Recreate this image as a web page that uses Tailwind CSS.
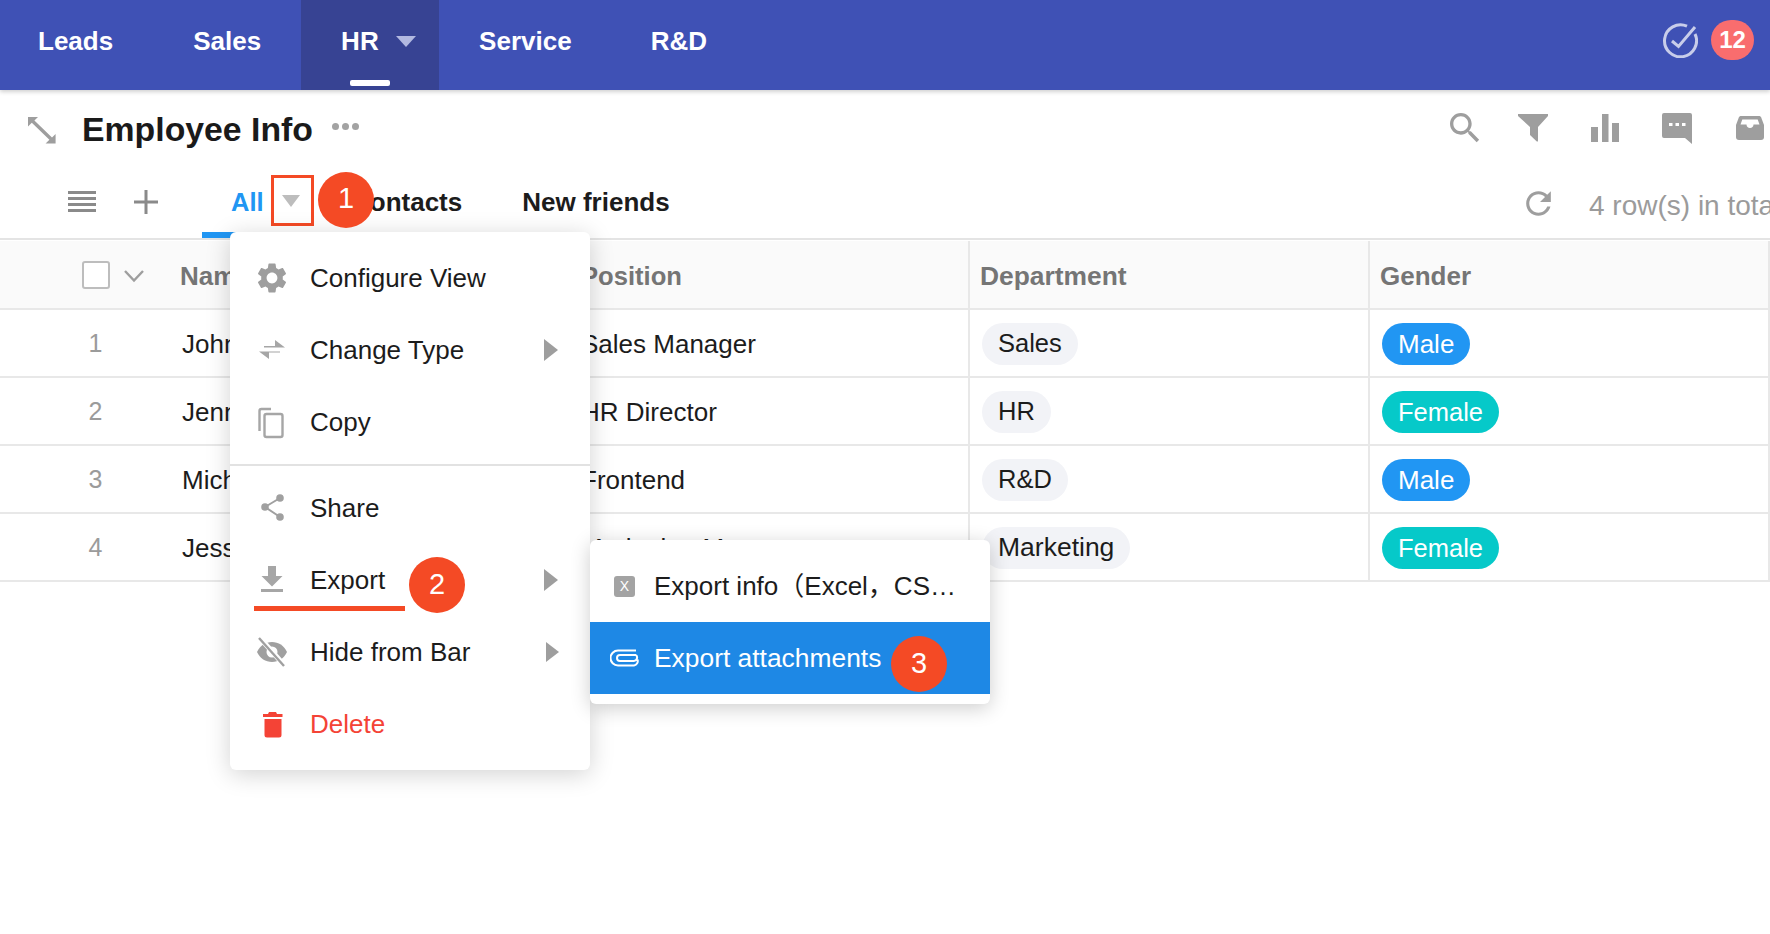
<!DOCTYPE html>
<html lang="en">
<head>
<meta charset="utf-8">
<title>Employee Info</title>
<script src="https://cdn.jsdelivr.net/npm/@tailwindcss/browser@4"></script>
</head>
<body class="w-[1770px] h-[934px] overflow-hidden bg-white relative font-['Liberation_Sans','Noto_Sans_CJK_SC',sans-serif] text-[26px] text-[#1c1c1c]">

<!-- top nav -->
<header class="relative z-10 h-[90px] bg-[#3f51b5] flex items-stretch text-white font-bold text-[26px] shadow-[0_2px_4px_rgba(0,0,0,0.18)]">
  <div class="pl-[38px] pr-[40px] flex items-center pb-[8px]">Leads</div>
  <div class="px-[40px] flex items-center pb-[8px]">Sales</div>
  <div class="relative w-[138px] pl-[40px] bg-[#374393] flex items-center pb-[8px]">
    <span>HR</span>
    <svg class="ml-[17px] mt-[1px]" width="20" height="11" viewBox="0 0 20 11"><path d="M0 0h20L10 11z" fill="#b2b9e1"/></svg>
    <span class="absolute left-[49px] top-[80px] w-[40px] h-[6px] rounded-[2px] bg-white"></span>
  </div>
  <div class="px-[40px] flex items-center pb-[8px]">Service</div>
  <div class="pl-[39px] pr-[40px] flex items-center pb-[8px]">R&amp;D</div>
  <div class="ml-auto flex items-center gap-[13px] pr-[16px] pb-[10px]">
    <svg width="36" height="36" viewBox="0 0 36 36" fill="none" stroke="#c8cdea" stroke-width="3"><path d="M33 12A16 16 0 1 1 25 4.200"/><path d="M10 19l6.500 5.500L33 5"/></svg>
    <span class="w-[43px] h-[40px] rounded-full bg-[#f96d6e] flex items-center justify-center text-[24px] leading-none">12</span>
  </div>
</header>

<!-- title row -->
<div class="h-[80px] flex items-center relative">
  <svg class="ml-[27px] shrink-0" width="30" height="30" viewBox="0 0 30 30" fill="#9e9e9e"><path d="M1 2h10l-3.600 3.600L25 22.600l3.600-3.600v9.500H18.600l3.800-3.700L4.800 7.800 1 11.500z"/></svg>
  <h1 class="ml-[25px] text-[33.800px] leading-none font-bold text-[#1a1a1a] whitespace-nowrap">Employee Info</h1>
  <div class="ml-[19px] mb-[7px] flex gap-[3px]">
    <span class="w-[7px] h-[7px] rounded-full bg-[#a3a3a3]"></span>
    <span class="w-[7px] h-[7px] rounded-full bg-[#a3a3a3]"></span>
    <span class="w-[7px] h-[7px] rounded-full bg-[#a3a3a3]"></span>
  </div>
  <div class="ml-auto flex items-center pr-[6px] mb-[5px]">
    <svg width="40" height="40" viewBox="0 0 24 24" fill="#9e9e9e"><path d="M15.500 14h-.79l-.28-.27C15.410 12.590 16 11.110 16 9.500 16 5.910 13.090 3 9.500 3S3 5.910 3 9.500 5.910 16 9.500 16c1.610 0 3.090-.59 4.230-1.570l.27.28v.79l5 4.990L20.490 19l-4.990-5zm-6 0C7.010 14 5 11.990 5 9.500S7.010 5 9.500 5 14 7.010 14 9.500 11.990 14 9.500 14z"/></svg>
    <svg class="ml-[32px]" width="32" height="30" viewBox="0 0 32 30" fill="#9e9e9e"><path d="M1 1h30v2L21 14v13.500c0 1-.6 1.600-1.500.8L13 22v-8L1 3z"/></svg>
    <svg class="ml-[42px]" width="28" height="28" viewBox="0 0 28 28" fill="#9e9e9e"><path d="M0 13h7v15H0zM11 0h6.500v28H11zM21 9h7v19h-7z"/></svg>
    <svg class="ml-[42px]" width="32" height="32" viewBox="0 0 32 32" fill="#9e9e9e"><path d="M3 1h26a2 2 0 0 1 2 2v29l-7-6H3a2 2 0 0 1-2-2V3a2 2 0 0 1 2-2z"/><path d="M8 11h3.500v3H8zM14.500 11H18v3h-3.500zM21 11h3.500v3H21z" fill="#fff"/></svg>
    <svg class="ml-[43px]" width="28" height="24" viewBox="0 0 28 24" fill="#9e9e9e"><path d="M5 0h18c1 0 1.800.5 2.200 1.500L28 9v12a3 3 0 0 1-3 3H3a3 3 0 0 1-3-3V9l2.800-7.500C3.200.5 4 0 5 0z"/><path d="M4.500 8.500l1.800-5h15.400l1.800 5h-6c0 2-1.500 3.500-3.500 3.500s-3.500-1.500-3.500-3.500z" fill="#fff"/></svg>
  </div>
</div>

<!-- tabs row -->
<div class="h-[68px] flex items-center pb-[4px] relative whitespace-nowrap">
  <svg class="ml-[68px] shrink-0" width="28" height="24" viewBox="0 0 28 24" fill="#8a8a8a"><path d="M0 1h28v3H0zM0 7h28v3H0zM0 13h28v3H0zM0 19h28v3H0z"/></svg>
  <svg class="ml-[37px] shrink-0" width="26" height="26" viewBox="0 0 26 26" fill="#8a8a8a"><path d="M11.500 1h3v10.500H25v3H14.500V25h-3V14.500H1v-3h10.500z"/></svg>
  <div class="ml-[72px] font-bold text-[#2196f3] w-[120px] shrink-0 text-[25.500px]">All</div>
  <div class="font-bold">Contacts</div>
  <div class="ml-[60px] font-bold">New friends</div>
  <span class="absolute left-[202px] top-[62px] w-[128px] h-[6px] bg-[#2196f3]"></span>
  <div class="ml-auto flex items-center mt-[3px] w-[244px] shrink-0 overflow-hidden">
    <svg class="-ml-[6px] shrink-0" width="37" height="37" viewBox="0 0 24 24" fill="#9e9e9e"><path d="M17.650 6.350C16.200 4.900 14.210 4 12 4c-4.420 0-7.990 3.580-7.990 8s3.570 8 7.990 8c3.730 0 6.840-2.550 7.730-6h-2.080c-.82 2.330-3.040 4-5.650 4-3.310 0-6-2.690-6-6s2.690-6 6-6c1.660 0 3.140.69 4.220 1.780L13 11h7V4l-2.350 2.350z"/></svg>
    <span class="ml-[32px] pt-[5px] text-[#9b9b9b] text-[28px]">4 row(s) in total</span>
  </div>
</div>

<!-- table -->
<div class="border-t-2 border-[#e4e4e4] pt-[1px]">
  <div class="grid grid-cols-[170px_400px_400px_400px_400px] h-[69px] pt-[4px] bg-[#fafafa] border-b-2 border-[#e8e8e8] font-bold text-[#757575]">
    <div class="flex items-center pl-[82px] -mt-[4px]">
      <span class="w-[28px] h-[28px] rounded-[3px] border-2 border-[#bdbdbd] bg-white shrink-0"></span>
      <svg class="ml-[13px] mt-[3px] shrink-0" width="22" height="14" viewBox="0 0 22 14" fill="none" stroke="#9e9e9e" stroke-width="2.400"><path d="M2 2l9 9.500L20 2"/></svg>
    </div>
    <div class="flex items-center pl-[10px] border-r-2 border-[#e8e8e8] -mt-[4px] pt-[4px]">Name</div>
    <div class="flex items-center pl-[11px] border-r-2 border-[#e8e8e8] -mt-[4px] pt-[4px] text-[25.600px]">Position</div>
    <div class="flex items-center pl-[10px] border-r-2 border-[#e8e8e8] -mt-[4px] pt-[4px] text-[26.400px]">Department</div>
    <div class="flex items-center pl-[10px] border-r-2 border-[#e8e8e8] -mt-[4px] pt-[4px]">Gender</div>
  </div>

  <div class="grid grid-cols-[170px_400px_400px_400px_400px] h-[68px] border-b-2 border-[#e8e8e8]">
    <div class="flex items-center justify-center pl-[21px] pt-[2px] text-[#9b9b9b] text-[25px]">1</div>
    <div class="flex items-center pl-[12px] pt-[2px] border-r-2 border-[#e8e8e8]">John</div>
    <div class="flex items-center pl-[11px] pt-[2px] border-r-2 border-[#e8e8e8]">Sales Manager</div>
    <div class="flex items-center pl-[12px] pt-[1px] border-r-2 border-[#e8e8e8]"><span class="h-[42px] px-[16px] rounded-[21px] bg-[#f2f3f7] flex items-center text-[25.500px]">Sales</span></div>
    <div class="flex items-center pl-[12px] pt-[2px] border-r-2 border-[#e8e8e8]"><span class="h-[42px] px-[16px] rounded-[21px] bg-[#2196f3] text-white flex items-center">Male</span></div>
  </div>
  <div class="grid grid-cols-[170px_400px_400px_400px_400px] h-[68px] border-b-2 border-[#e8e8e8]">
    <div class="flex items-center justify-center pl-[21px] pt-[2px] text-[#9b9b9b] text-[25px]">2</div>
    <div class="flex items-center pl-[12px] pt-[2px] border-r-2 border-[#e8e8e8]">Jenny</div>
    <div class="flex items-center pl-[11px] pt-[2px] border-r-2 border-[#e8e8e8]">HR Director</div>
    <div class="flex items-center pl-[12px] pt-[1px] border-r-2 border-[#e8e8e8]"><span class="h-[42px] px-[16px] rounded-[21px] bg-[#f2f3f7] flex items-center text-[25.500px]">HR</span></div>
    <div class="flex items-center pl-[12px] pt-[2px] border-r-2 border-[#e8e8e8]"><span class="h-[42px] px-[16px] rounded-[21px] bg-[#06c9c9] text-white flex items-center text-[25.500px]">Female</span></div>
  </div>
  <div class="grid grid-cols-[170px_400px_400px_400px_400px] h-[68px] border-b-2 border-[#e8e8e8]">
    <div class="flex items-center justify-center pl-[21px] pt-[2px] text-[#9b9b9b] text-[25px]">3</div>
    <div class="flex items-center pl-[12px] pt-[2px] border-r-2 border-[#e8e8e8]">Michael</div>
    <div class="flex items-center pl-[11px] pt-[2px] border-r-2 border-[#e8e8e8]">Frontend</div>
    <div class="flex items-center pl-[12px] pt-[1px] border-r-2 border-[#e8e8e8]"><span class="h-[42px] px-[16px] rounded-[21px] bg-[#f2f3f7] flex items-center text-[25.500px]">R&amp;D</span></div>
    <div class="flex items-center pl-[12px] pt-[2px] border-r-2 border-[#e8e8e8]"><span class="h-[42px] px-[16px] rounded-[21px] bg-[#2196f3] text-white flex items-center">Male</span></div>
  </div>
  <div class="grid grid-cols-[170px_400px_400px_400px_400px] h-[68px] border-b-2 border-[#e8e8e8]">
    <div class="flex items-center justify-center pl-[21px] pt-[2px] text-[#9b9b9b] text-[25px]">4</div>
    <div class="flex items-center pl-[12px] pt-[2px] border-r-2 border-[#e8e8e8]">Jessica</div>
    <div class="flex items-center pl-[11px] pt-[2px] border-r-2 border-[#e8e8e8]">Marketing Manager</div>
    <div class="flex items-center pl-[12px] pt-[1px] border-r-2 border-[#e8e8e8]"><span class="h-[42px] px-[16px] rounded-[21px] bg-[#f2f3f7] flex items-center text-[26.500px]">Marketing</span></div>
    <div class="flex items-center pl-[12px] pt-[2px] border-r-2 border-[#e8e8e8]"><span class="h-[42px] px-[16px] rounded-[21px] bg-[#06c9c9] text-white flex items-center text-[25.500px]">Female</span></div>
  </div>
</div>

<!-- red tab marker -->
<div class="absolute z-20 left-[271px] top-[175px] w-[43px] h-[51px] border-[3px] border-[#f44a25] flex justify-center pt-[17px]">
  <svg class="-ml-[3px]" width="18" height="12" viewBox="0 0 18 12"><path d="M0 0h18L9 12z" fill="#bdbdbd"/></svg>
</div>
<div class="absolute z-40 left-[318px] top-[172px] w-[56px] h-[56px] rounded-full bg-[#f44a25] text-white text-[29px] flex items-center justify-center pb-[3px]">1</div>

<!-- context menu -->
<div class="absolute z-20 left-[230px] top-[232px] w-[360px] h-[538px] bg-white rounded-[6px] py-[10px] shadow-[0_4px_24px_rgba(0,0,0,0.18)]">
  <div class="h-[72px] flex items-center">
    <svg class="ml-[24px] shrink-0" width="36" height="36" viewBox="0 0 24 24" fill="#9e9e9e"><path d="M19.140 12.940c.04-.3.06-.61.06-.94 0-.32-.02-.64-.07-.94l2.030-1.580c.18-.14.23-.41.12-.61l-1.920-3.320c-.12-.22-.37-.29-.59-.22l-2.390.96c-.5-.38-1.030-.7-1.620-.94l-.36-2.540c-.04-.24-.24-.41-.48-.41h-3.840c-.24 0-.43.17-.47.41l-.36 2.540c-.59.24-1.130.57-1.620.94l-2.390-.96c-.22-.08-.47 0-.59.22L2.740 8.870c-.12.21-.08.47.12.61l2.030 1.580c-.05.3-.09.63-.09.94s.02.64.07.94l-2.030 1.580c-.18.14-.23.41-.12.61l1.920 3.320c.12.22.37.29.59.22l2.390-.96c.5.38 1.030.7 1.620.94l.36 2.540c.05.24.24.41.48.41h3.840c.24 0 .44-.17.47-.41l.36-2.540c.59-.24 1.130-.56 1.620-.94l2.390.96c.22.08.47 0 .59-.22l1.920-3.320c.12-.22.07-.47-.12-.61l-2.010-1.580zM12 15.600c-1.980 0-3.600-1.620-3.600-3.600s1.620-3.600 3.600-3.600 3.600 1.620 3.600 3.600-1.620 3.600-3.600 3.600z"/></svg>
    <span class="ml-[20px]">Configure View</span>
  </div>
  <div class="h-[72px] flex items-center">
    <svg class="ml-[24px] shrink-0" width="36" height="36" viewBox="0 0 36 36" fill="#a6a6a6"><path d="M10 14h11V8l10 7.500H10zM26 20.500H15V27L5 19.500h21z"/></svg>
    <span class="ml-[20px]">Change Type</span>
    <svg class="ml-auto mr-[32px] shrink-0" width="14" height="22" viewBox="0 0 14 22"><path d="M0 0l14 11L0 22z" fill="#9e9e9e"/></svg>
  </div>
  <div class="h-[72px] flex items-center">
    <svg class="ml-[24px] shrink-0" width="36" height="36" viewBox="0 0 36 36" fill="none" stroke="#a6a6a6" stroke-width="2.400"><path d="M17 5H7.500A2 2 0 0 0 5.500 7V27"/><rect x="10.500" y="10" width="18" height="23" rx="2"/></svg>
    <span class="ml-[20px]">Copy</span>
  </div>
  <div class="h-[2px] bg-[#e2e2e2] mt-[6px] mb-[6px]"></div>
  <div class="h-[72px] flex items-center">
    <svg class="ml-[24px] shrink-0" width="36" height="36" viewBox="0 0 36 36" fill="#a0a0a0" stroke="none"><circle cx="11" cy="17" r="3.800"/><circle cx="26" cy="8" r="3.800"/><circle cx="26" cy="27" r="3.800"/><path d="M11 17L26 8M11 17l15 10" fill="none" stroke="#a0a0a0" stroke-width="2"/></svg>
    <span class="ml-[20px]">Share</span>
  </div>
  <div class="h-[72px] flex items-center relative">
    <svg class="ml-[24px] shrink-0" width="36" height="36" viewBox="0 0 36 36" fill="#a6a6a6"><path d="M14 4h8v10h6.500L18 24.500 7.500 14H14zM7 27h22v3H7z"/></svg>
    <span class="ml-[20px]">Export</span>
    <span class="absolute left-[24px] top-[62px] w-[151px] h-[5px] bg-[#f44a25]"></span>
    <svg class="ml-auto mr-[32px] shrink-0" width="14" height="22" viewBox="0 0 14 22"><path d="M0 0l14 11L0 22z" fill="#9e9e9e"/></svg>
  </div>
  <div class="h-[72px] flex items-center">
    <svg class="ml-[24px] shrink-0" width="36" height="36" viewBox="0 0 36 36"><path d="M3 18c3-6.500 8.500-10 15-10s12 3.500 15 10c-3 6.500-8.500 10-15 10S6 24.500 3 18z" fill="#a0a0a0"/><circle cx="18" cy="18" r="5.500" fill="#fff"/><path d="M6 4l24 27" stroke="#fff" stroke-width="5"/><path d="M5 4l25 28" stroke="#a0a0a0" stroke-width="2.400"/></svg>
    <span class="ml-[20px]">Hide from Bar</span>
    <svg class="ml-auto mr-[31px] shrink-0" width="13" height="20" viewBox="0 0 13 20"><path d="M0 0l13 10L0 20z" fill="#9e9e9e"/></svg>
  </div>
  <div class="h-[72px] flex items-center text-[#f44336]">
    <svg class="ml-[24px] shrink-0" width="36" height="36" viewBox="0 0 36 36" fill="#f44336"><path d="M15 6h7l1 2h5.500v3H9V8h5zM10.500 13h17v16a2.500 2.500 0 0 1-2.500 2.500H13A2.500 2.500 0 0 1 10.500 29z"/></svg>
    <span class="ml-[20px]">Delete</span>
  </div>
</div>

<!-- export submenu -->
<div class="absolute z-30 left-[590px] top-[540px] w-[400px] h-[164px] bg-white rounded-[6px] pt-[10px] shadow-[0_4px_20px_rgba(0,0,0,0.2)]">
  <div class="h-[72px] flex items-center">
    <span class="ml-[24px] w-[21px] h-[21px] rounded-[3px] bg-[#a3a3a3] text-white text-[14px] flex items-center justify-center shrink-0">X</span>
    <span class="ml-[19px] w-[305px] truncate">Export info（Excel，CSV）</span>
  </div>
  <div class="h-[72px] flex items-center bg-[#1e88e5] text-white">
    <svg class="ml-[20px] shrink-0" width="29" height="18" viewBox="0 0 29 18" fill="none" stroke="#fff" stroke-width="2"><path d="M26 6H10a3 3 0 0 0 0 6h14"/><path d="M24 12a3.500 3.500 0 0 0 2-6M26 1.500H8a7.500 7.500 0 0 0 0 15h16a4.500 4.500 0 0 0 3.500-6"/></svg>
    <span class="ml-[15px] pt-[2px] text-[26.400px]">Export attachments</span>
  </div>
</div>
<div class="absolute z-40 left-[409px] top-[557px] w-[56px] h-[56px] rounded-full bg-[#f44a25] text-white text-[29px] flex items-center justify-center">2</div>
<div class="absolute z-40 left-[891px] top-[636px] w-[56px] h-[56px] rounded-full bg-[#f44a25] text-white text-[29px] flex items-center justify-center">3</div>

</body>
</html>
